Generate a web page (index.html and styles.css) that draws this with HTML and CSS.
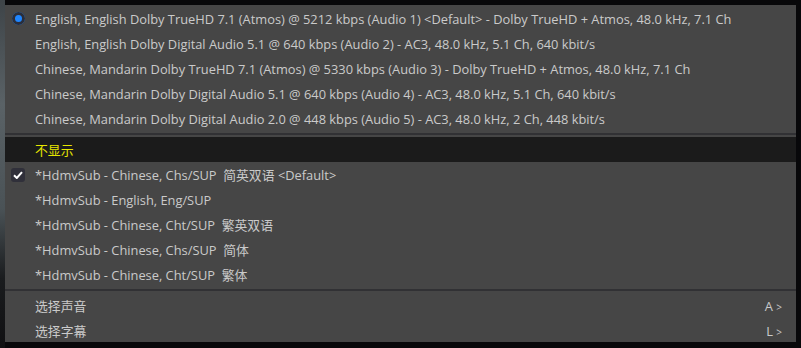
FILE: index.html
```html
<!DOCTYPE html>
<html>
<head>
<meta charset="utf-8">
<link rel="stylesheet" href="styles.css">
</head>
<body>
<div class="screen">
  <div class="left-strip"></div>
  <div class="menu">
    <div class="item"><span class="mark"><span class="radio"></span></span><span class="label">English, English Dolby TrueHD 7.1 (Atmos) @ 5212 kbps (Audio 1) &lt;Default&gt; - Dolby TrueHD + Atmos, 48.0 kHz, 7.1 Ch</span></div>
    <div class="item"><span class="mark"></span><span class="label">English, English Dolby Digital Audio 5.1 @ 640 kbps (Audio 2) - AC3, 48.0 kHz, 5.1 Ch, 640 kbit/s</span></div>
    <div class="item"><span class="mark"></span><span class="label">Chinese, Mandarin Dolby TrueHD 7.1 (Atmos) @ 5330 kbps (Audio 3) - Dolby TrueHD + Atmos, 48.0 kHz, 7.1 Ch</span></div>
    <div class="item"><span class="mark"></span><span class="label">Chinese, Mandarin Dolby Digital Audio 5.1 @ 640 kbps (Audio 4) - AC3, 48.0 kHz, 5.1 Ch, 640 kbit/s</span></div>
    <div class="item"><span class="mark"></span><span class="label">Chinese, Mandarin Dolby Digital Audio 2.0 @ 448 kbps (Audio 5) - AC3, 48.0 kHz, 2 Ch, 448 kbit/s</span></div>
    <div class="sep"></div>
    <div class="item hl"><span class="mark"></span><span class="label yellow">不显示</span></div>
    <div class="item"><span class="mark"><span class="check"><svg width="10" height="8" viewBox="0 0 10 8"><path d="M1 4.2 L3.8 7 L9 1.2" fill="none" stroke="#fff" stroke-width="2"/></svg></span></span><span class="label">*HdmvSub - Chinese, Chs/SUP&nbsp; 简英双语 &lt;Default&gt;</span></div>
    <div class="item"><span class="mark"></span><span class="label">*HdmvSub - English, Eng/SUP</span></div>
    <div class="item"><span class="mark"></span><span class="label">*HdmvSub - Chinese, Cht/SUP&nbsp; 繁英双语</span></div>
    <div class="item"><span class="mark"></span><span class="label">*HdmvSub - Chinese, Chs/SUP&nbsp; 简体</span></div>
    <div class="item"><span class="mark"></span><span class="label">*HdmvSub - Chinese, Cht/SUP&nbsp; 繁体</span></div>
    <div class="sep"></div>
    <div class="item"><span class="mark"></span><span class="label">选择声音</span><span class="key">A <small>&gt;</small></span></div>
    <div class="item"><span class="mark"></span><span class="label">选择字幕</span><span class="key">L <small>&gt;</small></span></div>
  </div>
</div>
</body>
</html>
```
FILE: styles.css
```css
html, body {
  margin: 0;
  padding: 0;
  background: #0a0a0c;
}
.screen {
  width: 801px;
  height: 348px;
  position: relative;
  overflow: hidden;
  background: #08080a;
  font-family: "Open Sans", "Noto Sans CJK SC", sans-serif;
  font-size: 12.85px;
}
.left-strip {
  position: absolute;
  left: 0;
  top: 0;
  width: 5px;
  height: 348px;
  background: linear-gradient(#3e4448, #5a6266 30%, #4a5256 60%, #1a1c1e 80%, #101012);
}
.menu {
  position: absolute;
  left: 5px;
  top: 5px;
  width: 791px;
  height: 337px;
  overflow: hidden;
  background: #464646;
  display: flex;
  flex-direction: column;
  padding-top: 1px;
  box-sizing: border-box;
}
.item {
  height: 25px;
  display: flex;
  align-items: center;
  color: #cacaca;
  flex-shrink: 0;
}
.item.hl {
  background: #1b1b1b;
}
.mark {
  width: 26px;
  margin-right: 4px;
  display: flex;
  justify-content: center;
  align-items: center;
}
.label {
  flex: 1;
  white-space: nowrap;
}
.yellow {
  color: #e6e600;
}
.key {
  width: 30px;
  margin-right: 14px;
  text-align: right;
}
.key small {
  font-size: 10px;
}
.radio {
  width: 13px;
  height: 13px;
  border-radius: 50%;
  background: #1f86ff;
  box-shadow: inset 0 0 0 3px #2b2e3a;
}
.check {
  width: 14px;
  height: 14px;
  border-radius: 3px;
  background: #30303a;
  display: flex;
  align-items: center;
  justify-content: center;
}
.sep {
  height: 2px;
  margin: 2px 0;
  flex-shrink: 0;
  background: #313134;
}
```
